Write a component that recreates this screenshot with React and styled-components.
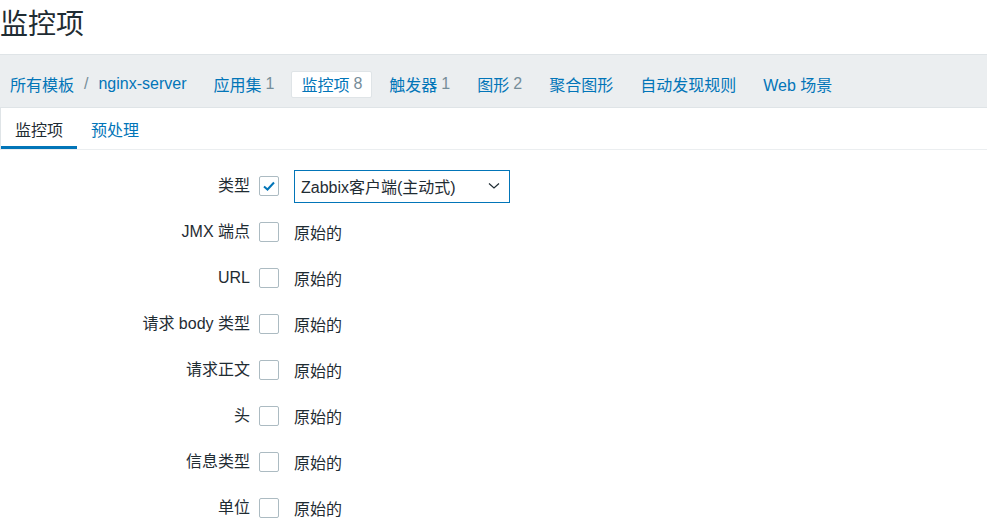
import styled, { createGlobalStyle } from "styled-components";

const GlobalStyle = createGlobalStyle`
  html, body {
    margin: 0;
    padding: 0;
    background: #ffffff;
  }
  body {
    font-family: "Liberation Sans", Arial, "Noto Sans CJK SC", sans-serif;
    color: #1f2c33;
    font-size: 16px;
  }
`;

const navLinks = [
  { label: "应用集", count: 1 },
  { label: "监控项", count: 8, active: true },
  { label: "触发器", count: 1 },
  { label: "图形", count: 2 },
  { label: "聚合图形" },
  { label: "自动发现规则" },
  { label: "Web 场景" },
];

const fields = [
  { label: "类型", checked: true, select: "Zabbix客户端(主动式)" },
  { label: "JMX 端点" },
  { label: "URL" },
  { label: "请求 body 类型" },
  { label: "请求正文" },
  { label: "头" },
  { label: "信息类型" },
  { label: "单位" },
];

const Page = styled.div`
  width: 987px;
  overflow: hidden;
`;

const Header = styled.header`
  height: 54px;
  display: flex;
  align-items: center;
  padding-bottom: 4px;
  box-sizing: border-box;
`;

const Title = styled.h1`
  margin: 0;
  font-size: 28px;
  font-weight: normal;
  line-height: 1;
  color: #1f2c33;
`;

const Nav = styled.nav`
  height: 54px;
  box-sizing: border-box;
  background: #ebeef0;
  border-top: 1px solid #dfe4e7;
  border-bottom: 1px solid #dfe4e7;
  display: flex;
  align-items: center;
  padding: 6px 0 0 0;
  gap: 7px;
`;

const NavItem = styled.span`
  display: inline-flex;
  align-items: center;
  height: 27px;
  box-sizing: border-box;
  padding: 0 9px;
  color: #0275b8;
  white-space: nowrap;
  border: 1px solid ${(p) => (p.$active ? "#dfe4e7" : "transparent")};
  background: ${(p) => (p.$active ? "#ffffff" : "transparent")};
  border-radius: 2px;
`;

const Separator = styled.span`
  color: #768d99;
  margin: 0 10px;
`;

const Count = styled.span`
  color: #768d99;
  margin-left: 4px;
`;

const TabBar = styled.div`
  display: flex;
  height: 42px;
  border-left: 1px solid #dfe4e7;
  border-bottom: 1px solid #ebeef0;
  box-sizing: border-box;
`;

const Tab = styled.span`
  display: flex;
  align-items: center;
  padding: 4px 14px 0;
  color: ${(p) => (p.$active ? "#1f2c33" : "#0275b8")};
  border-bottom: 3px solid ${(p) => (p.$active ? "#0275b8" : "transparent")};
`;

const Form = styled.div`
  display: grid;
  grid-template-columns: 250px 20px auto;
  column-gap: 9px;
  row-gap: 10px;
  padding-top: 18px;
  align-items: center;
`;

const Label = styled.label`
  text-align: right;
  white-space: nowrap;
  line-height: 36px;
`;

const Box = styled.span`
  width: 20px;
  height: 20px;
  box-sizing: border-box;
  border: 1px solid #acbbc2;
  border-radius: 2px;
  display: flex;
  align-items: center;
  justify-content: center;
  background: #ffffff;
`;

const Value = styled.div`
  padding-left: 6px;
  display: flex;
  align-items: center;
  min-height: 36px;
  color: #1f2c33;
`;

const Select = styled.div`
  width: 216px;
  height: 33px;
  box-sizing: border-box;
  border: 1px solid #0275b8;
  display: flex;
  align-items: center;
  justify-content: space-between;
  padding: 0 9px 0 6px;
  color: #1f2c33;
  background: #ffffff;
`;

const Check = () => (
  <svg width="14" height="12" viewBox="0 0 14 12">
    <path d="M2 6.5 L5.5 9.5 L12 2.5" fill="none" stroke="#0275b8" strokeWidth="2" />
  </svg>
);

const Chevron = () => (
  <svg width="12" height="8" viewBox="0 0 12 8">
    <path d="M1 1.5 L6 6 L11 1.5" fill="none" stroke="#1f2c33" strokeWidth="1.2" />
  </svg>
);

const App = () => (
  <Page>
    <GlobalStyle />
    <Header>
      <Title>监控项</Title>
    </Header>
    <Nav>
      <NavItem>
        所有模板
        <Separator>/</Separator>
        nginx-server
      </NavItem>
      {navLinks.map((l) => (
        <NavItem key={l.label} $active={l.active}>
          {l.label}
          {l.count !== undefined && <Count>{l.count}</Count>}
        </NavItem>
      ))}
    </Nav>
    <TabBar>
      <Tab $active>监控项</Tab>
      <Tab>预处理</Tab>
    </TabBar>
    <Form>
      {fields.map((f) => (
        <>
          <Label key={f.label}>{f.label}</Label>
          <Box>{f.checked && <Check />}</Box>
          <Value>
            {f.select ? (
              <Select>
                {f.select}
                <Chevron />
              </Select>
            ) : (
              "原始的"
            )}
          </Value>
        </>
      ))}
    </Form>
  </Page>
);

export default App;
